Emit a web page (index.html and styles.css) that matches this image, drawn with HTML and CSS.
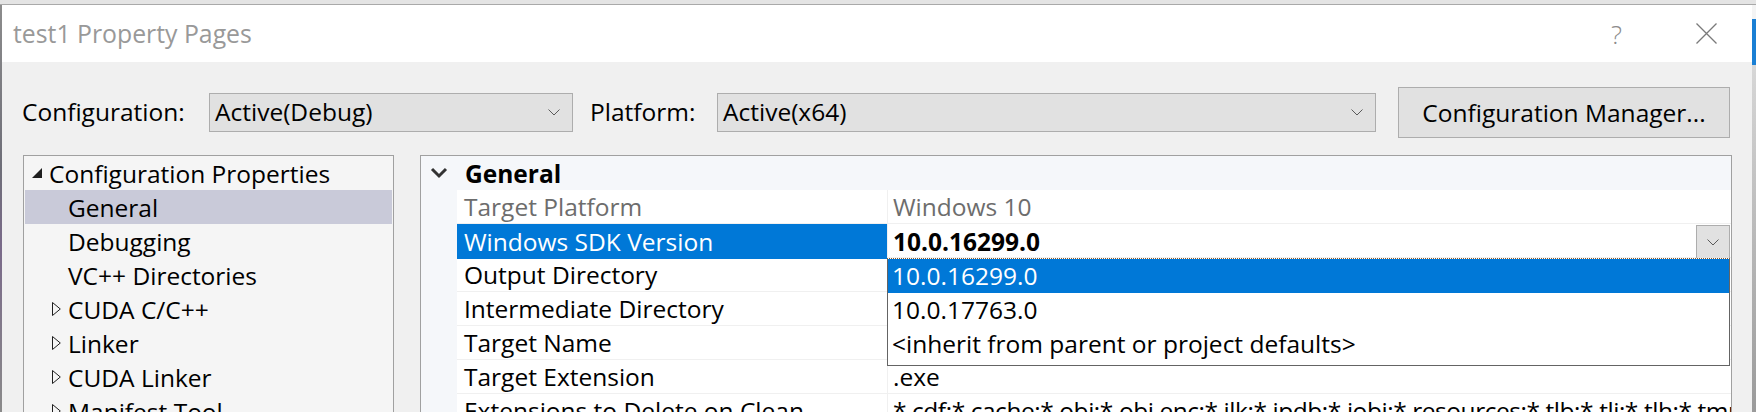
FILE: index.html
```html
<!DOCTYPE html>
<html>
<head>
<meta charset="utf-8">
<title>test1 Property Pages</title>
<link rel="stylesheet" href="styles.css">
</head>
<body>
<div class="screen">
  <div class="topstrip"></div>
  <div class="main">
    <div class="edge-left"></div>
    <div class="dialog">
      <div class="titlebar">
        <span class="title">test1 Property Pages</span>
        <span class="help">?</span>
        <span class="close"><svg width="21" height="21" viewBox="0 0 21 21"><path d="M0.5 0.5 L20.5 20.5 M20.5 0.5 L0.5 20.5" stroke="#7a7a7a" stroke-width="1.3" fill="none"/></svg></span>
      </div>
      <div class="toolbar">
        <span class="label lbl-config">Configuration:</span>
        <div class="combo combo-config"><span class="combo-text">Active(Debug)</span><svg class="chev" width="12" height="7" viewBox="0 0 12 7"><path d="M0.5 0.5 L6 6 L11.5 0.5" fill="none" stroke="#5a5a5a" stroke-width="1"/></svg></div>
        <span class="label lbl-platform">Platform:</span>
        <div class="combo combo-platform"><span class="combo-text">Active(x64)</span><svg class="chev" width="12" height="7" viewBox="0 0 12 7"><path d="M0.5 0.5 L6 6 L11.5 0.5" fill="none" stroke="#5a5a5a" stroke-width="1"/></svg></div>
        <button class="btn">Configuration Manager...</button>
      </div>
      <div class="content">
        <div class="tree">
          <div class="node root"><span class="twisty"><svg width="10" height="10" viewBox="0 0 10 10"><path d="M10 0 L10 10 L0 10 Z" fill="#1e1e1e"/></svg></span><span>Configuration Properties</span></div>
          <div class="node child selected"><span class="twisty"></span><span>General</span></div>
          <div class="node child"><span class="twisty"></span><span>Debugging</span></div>
          <div class="node child"><span class="twisty"></span><span>VC++ Directories</span></div>
          <div class="node child"><span class="twisty"><svg width="9" height="14" viewBox="0 0 9 14"><path d="M0.5 0.5 L8.3 7 L0.5 13.5 Z" fill="none" stroke="#1e1e1e" stroke-width="1"/></svg></span><span>CUDA C/C++</span></div>
          <div class="node child"><span class="twisty"><svg width="9" height="14" viewBox="0 0 9 14"><path d="M0.5 0.5 L8.3 7 L0.5 13.5 Z" fill="none" stroke="#1e1e1e" stroke-width="1"/></svg></span><span>Linker</span></div>
          <div class="node child"><span class="twisty"><svg width="9" height="14" viewBox="0 0 9 14"><path d="M0.5 0.5 L8.3 7 L0.5 13.5 Z" fill="none" stroke="#1e1e1e" stroke-width="1"/></svg></span><span>CUDA Linker</span></div>
          <div class="node child"><span class="twisty"><svg width="9" height="14" viewBox="0 0 9 14"><path d="M0.5 0.5 L8.3 7 L0.5 13.5 Z" fill="none" stroke="#1e1e1e" stroke-width="1"/></svg></span><span>Manifest Tool</span></div>
        </div>
        <div class="panel">
          <div class="group-head"><span class="group-chev"><svg width="18" height="12" viewBox="0 0 18 12"><path d="M2 2 L9 9 L16 2" fill="none" stroke="#333" stroke-width="3"/></svg></span><span class="group-title">General</span></div>
          <div class="props">
            <div class="prop readonly"><div class="pname">Target Platform</div><div class="pval">Windows 10</div></div>
            <div class="prop active"><div class="pname">Windows SDK Version</div><div class="pval"><span class="bold">10.0.16299.0</span><span class="dd-btn"><svg width="12" height="7" viewBox="0 0 12 7"><path d="M0.5 0.5 L6 6 L11.5 0.5" fill="none" stroke="#5a5a5a" stroke-width="1"/></svg></span>
              <div class="dropdown">
                <div class="dd-item dd-selected">10.0.16299.0</div>
                <div class="dd-item">10.0.17763.0</div>
                <div class="dd-item">&lt;inherit from parent or project defaults&gt;</div>
              </div>
            </div></div>
            <div class="prop"><div class="pname">Output Directory</div><div class="pval"></div></div>
            <div class="prop"><div class="pname">Intermediate Directory</div><div class="pval"></div></div>
            <div class="prop"><div class="pname">Target Name</div><div class="pval"></div></div>
            <div class="prop"><div class="pname">Target Extension</div><div class="pval">.exe</div></div>
            <div class="prop"><div class="pname">Extensions to Delete on Clean</div><div class="pval tight">*.cdf;*.cache;*.obj;*.obj.enc;*.ilk;*.ipdb;*.iobj;*.resources;*.tlb;*.tli;*.tlh;*.tmp;*.rsp;*.pgc;*.pgd;*.meta;*.tlog;*.manifest;*.res;*.pch;*.exp;*.idb;*.rep;*.xdc;*.pdb;*_manifest.rc;*.bsc;*.sbr;*.xml;*.metagen;*.bi</div></div>
          </div>
        </div>
      </div>
    </div>
    <div class="edge-right"></div>
  </div>
</div>
</body>
</html>
```
FILE: styles.css
```css
* { box-sizing: border-box; }
html, body { margin: 0; padding: 0; }
body {
  width: 1756px;
  height: 412px;
  overflow: hidden;
  background: #f0f0f0;
  font-family: "Open Sans", "Noto Sans", "Liberation Sans", sans-serif;
  font-size: 24.5px;
  color: #000;
}
.screen { width: 1756px; height: 412px; display: flex; flex-direction: column; overflow: hidden; }
.topstrip { height: 5px; background: #e4e4e4; border-bottom: 1px solid #a9a9a9; flex: none; }
.main { flex: 1; display: flex; min-height: 0; }
.edge-left { width: 2px; flex: none; background: linear-gradient(#8c8c8c, #6e6e78 40%, #7a6a8a 60%, #8a8a8a); }
.edge-right { width: 4px; flex: none; background: linear-gradient(#f4f4f4 0, #f4f4f4 14px, #1a7fd4 14px, #1a7fd4 60px, #d7d7d7 60px, #9a9a9a 100%); }
.dialog { flex: 1; display: flex; flex-direction: column; min-width: 0; overflow: hidden; }

.titlebar {
  height: 57px; flex: none; background: #fff;
  display: flex; align-items: center; padding-left: 11px;
}
.title { color: #999; font-size: 24.8px; line-height: 1; }
.help { margin-left: auto; margin-right: 74px; color: #8c8c8c; font-size: 26px; font-weight: 300; line-height: 1; }
.close { margin-right: 35px; display: flex; }

.toolbar {
  flex: none; display: flex; align-items: center;
  padding: 25px 22px 17px 20px;
}
.label { flex: none; white-space: nowrap; line-height: 1; }
.lbl-config { width: 187px; }
.lbl-platform { width: 127px; margin-left: 17px; }
.combo {
  flex: none; height: 39px; background: #e1e1e1; border: 1px solid #adadad;
  display: flex; align-items: center; padding: 0 12px 0 5px;
}
.combo-text { flex: 1; white-space: nowrap; line-height: 1; }
.combo-config { width: 364px; }
.combo-platform { width: 659px; }
.chev { flex: none; }
.btn {
  flex: none; margin-left: 22px; width: 332px; height: 51px;
  background: #e1e1e1; border: 1px solid #adadad; font: inherit; color: #000; padding: 0;
}

.content { flex: 1; display: flex; gap: 26px; padding: 0 20px 0 21px; min-height: 0; }
.tree {
  width: 371px; flex: none; height: 320px; background: #f5f5f5;
  border: 1px solid #a0a0a0; padding: 0 1px;
}
.node { height: 34px; display: flex; align-items: center; white-space: nowrap; }
.node.root { padding-left: 7px; }
.node.root .twisty { width: 17px; }
.node.child { padding-left: 27px; }
.node.child .twisty { width: 16px; }
.twisty { flex: none; display: flex; align-items: center; }
.node.selected { background: #c9cad9; }

.panel {
  flex: 1; min-width: 0; height: 320px; background: #f5f7fa;
  border: 1px solid #a0a0a0; overflow: hidden;
}
.group-head { height: 34px; display: flex; align-items: center; padding-left: 9px; }
.group-chev { width: 35px; display: flex; }
.group-title { font-weight: 700; }
.props { margin-left: 36px; background: #fff; }
.prop {
  display: grid; grid-template-columns: 430px 1fr; height: 34px;
  border-bottom: 1px solid #f0f0f0;
}
.pname { padding-left: 7px; white-space: nowrap; display: flex; align-items: center; }
.pval {
  padding-left: 5px; white-space: nowrap; display: flex; align-items: center;
  border-left: 1px solid #f0f0f0; overflow: visible; position: relative; min-width: 0;
}
.prop:last-child .pval { overflow: hidden; }
.pval.tight { letter-spacing: -0.45px; }
.readonly .pname, .readonly .pval { color: #6d6d6d; }
.active .pname { background: #0078d7; color: #fff; }
.bold { font-weight: 700; flex: 1; }
.dd-btn {
  flex: none; width: 34px; height: 34px; margin-right: 1px; margin-top: 1px;
  background: #e1e1e1; border: 1px solid #adadad;
  display: flex; align-items: center; justify-content: center;
}
.dropdown {
  position: absolute; top: 34px; left: -1px; right: 1px; z-index: 2;
  background: #fff; border: 1px solid #646464; border-top: 1px dotted #8a5a2a;
  padding-bottom: 4px;
}
.dd-item { height: 34px; line-height: 34px; padding-left: 4px; white-space: nowrap; }
.dd-selected { background: #0078d7; color: #fff; }
```
